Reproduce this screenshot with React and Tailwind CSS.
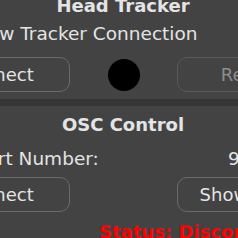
import React from 'react';

const font = { fontFamily: '"DejaVu Sans", Verdana, sans-serif' };

const PanelButton = ({ children, disabled, className = '' }) => (
  <button
    className={`w-[142px] h-[35px] shrink-0 rounded-[10px] border text-[18px] whitespace-nowrap ${
      disabled ? 'border-[#5a5a5a] text-[#8c8c8c]' : 'border-[#6a6a6a] text-[#e4e4e4]'
    } ${className}`}
  >
    {children}
  </button>
);

const App = () => {
  return (
    <div className="w-[238px] h-[238px] overflow-hidden bg-[#434343] text-[#e4e4e4]" style={font}>
      <div className="w-[420px] ml-[-87px] flex flex-col">
        {/* Head tracker section */}
        <div className="mt-[-6px] h-[24px] leading-[24px] text-[18px] font-bold text-center">
          Head Tracker
        </div>
        <div className="mt-[4px] h-[24px] leading-[24px] text-[18.5px] pl-[61px] whitespace-nowrap">
          New Tracker Connection
        </div>
        <div className="mt-[11px] h-[35px] flex items-center justify-center">
          <PanelButton className="pr-[4px]">Connect</PanelButton>
          <div className="ml-[38px] mr-[37px] w-[32px] h-[32px] rounded-full bg-black shrink-0" />
          <PanelButton disabled className="pr-[3px]">Reset</PanelButton>
        </div>

        <div className="mt-[7px] h-[7px] bg-[#363636]" />

        {/* OSC section */}
        <div className="mt-[7px] h-[24px] leading-[24px] text-[18px] font-bold text-center">
          OSC Control
        </div>
        <div className="mt-[10px] h-[24px] leading-[24px] text-[18.5px] flex whitespace-nowrap">
          <span className="pl-[63px] w-[315px]">Port Number:</span>
          <span>9000</span>
        </div>
        <div className="mt-[6px] h-[35px] flex items-center justify-center">
          <PanelButton className="pr-[4px]">Connect</PanelButton>
          <div className="ml-[38px] mr-[37px] w-[32px] shrink-0" />
          <PanelButton>Show Logs</PanelButton>
        </div>
        <div className="mt-[8px] h-[24px] leading-[24px] text-[18px] font-bold text-[#ff0000] pl-[186px] whitespace-nowrap">
          Status: Disconnected
        </div>
      </div>
    </div>
  );
};

export default App;
